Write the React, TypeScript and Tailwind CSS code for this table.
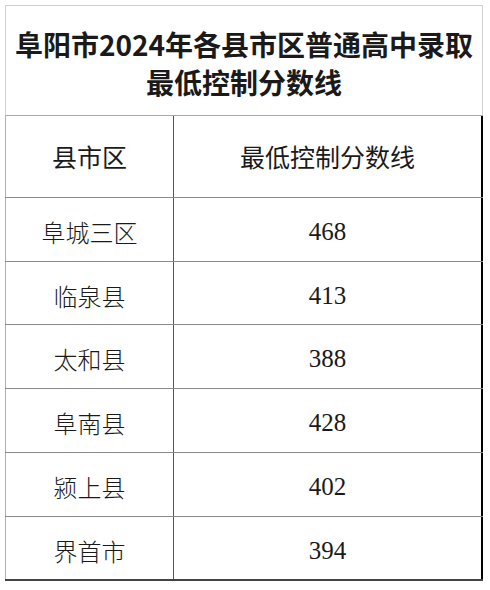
import React from "react";

const rows: { name: string; score: string; h: string }[] = [
  { name: "阜城三区", score: "468", h: "h-[64px]" },
  { name: "临泉县", score: "413", h: "h-[63px]" },
  { name: "太和县", score: "388", h: "h-[64px]" },
  { name: "阜南县", score: "428", h: "h-[64px]" },
  { name: "颍上县", score: "402", h: "h-[64px]" },
  { name: "界首市", score: "394", h: "h-[64px]" },
];

const sans = "font-['Noto_Sans_CJK_SC','Noto_Sans',sans-serif]";

export default function App() {
  return (
    <div className="w-[490px] h-[590px] bg-white pt-[5px] pl-[5px] text-[#1a1a1a]">
      <div className="w-[478px]">
        <div
          className={`h-[111px] border border-[#cfcfcf] border-b-[#a8a8a8] flex flex-col items-center justify-center pt-[4px] ${sans} font-semibold text-[28px] leading-[38px]`}
        >
          <div>阜阳市2024年各县市区普通高中录取</div>
          <div>最低控制分数线</div>
        </div>
        <div className={`flex h-[82px] border-b border-[#8a8a8a] ${sans} text-[25px]`}>
          <div className="w-[169px] border-l border-l-[#b0b0b0] border-r border-r-[#555] flex items-center justify-center">
            县市区
          </div>
          <div className="flex-1 border-r-2 border-r-black flex items-center justify-center">
            最低控制分数线
          </div>
        </div>
        {rows.map((r, i) => (
          <div
            key={r.name}
            className={`flex ${r.h} border-b ${i === rows.length - 1 ? "border-b-2 border-b-[#444]" : "border-b-[#8a8a8a]"}`}
          >
            <div
              className={`w-[169px] border-l border-l-[#b0b0b0] border-r border-r-[#555] flex items-center justify-center pt-[5px] ${sans} font-light text-[24px]`}
            >
              {r.name}
            </div>
            <div className="flex-1 border-r-2 border-r-black flex items-center justify-center pt-[5px] font-['Liberation_Serif',serif] text-[25px]">
              {r.score}
            </div>
          </div>
        ))}
      </div>
    </div>
  );
}
